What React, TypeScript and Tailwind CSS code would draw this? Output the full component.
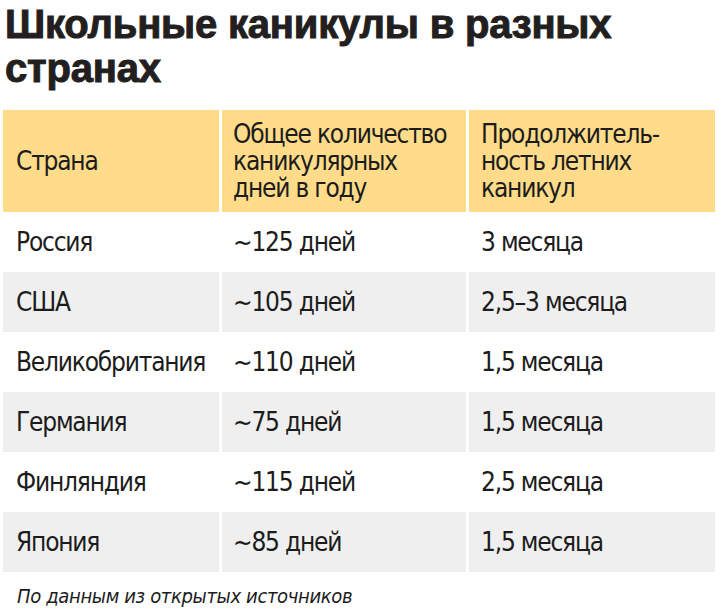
const rows = [
  { country: "Россия", days: "~125 дней", summer: "3 месяца" },
  { country: "США", days: "~105 дней", summer: "2,5–3 месяца" },
  { country: "Великобритания", days: "~110 дней", summer: "1,5 месяца" },
  { country: "Германия", days: "~75 дней", summer: "1,5 месяца" },
  { country: "Финляндия", days: "~115 дней", summer: "2,5 месяца" },
  { country: "Япония", days: "~85 дней", summer: "1,5 месяца" },
];

export default function App() {
  return (
    <div className="w-[720px] h-[615px] bg-white overflow-hidden">
      {/* title */}
      <h1 className="px-[5px] pt-[2px] text-[40px] leading-[44px] font-extrabold tracking-[-0.2px] text-[#231f20] [-webkit-text-stroke:1px_#231f20] font-['Liberation_Sans',Arial,sans-serif]">
        Школьные каникулы в разных странах
      </h1>

      <table className="mt-[20px] border-separate border-spacing-x-[3px] border-spacing-y-0 text-[26px] leading-[27px] tracking-[-1.2px] text-[#1c1c1c] font-['DejaVu_Sans_Condensed','DejaVu_Sans',sans-serif]">
        <thead>
          <tr className="bg-[#ffdb8a] h-[102px]">
            <th className="w-[216px] px-[13px] text-left font-normal align-middle">Страна</th>
            <th className="w-[244px] px-[11px] text-left font-normal align-middle">
              Общее количество каникулярных дней в году
            </th>
            <th className="w-[246px] px-[12px] text-left font-normal align-middle">
              Продолжитель-
              <br />
              ность летних каникул
            </th>
          </tr>
        </thead>
        <tbody>
          {rows.map((r, i) => (
            <tr key={r.country} className={i % 2 === 1 ? "bg-[#efefef] h-[60px]" : "bg-white h-[60px]"}>
              <td className="px-[13px]">{r.country}</td>
              <td className="px-[11px]">{r.days}</td>
              <td className="px-[12px]">{r.summer}</td>
            </tr>
          ))}
        </tbody>
      </table>

      <p className="mt-[13px] px-[17px] text-[20px] leading-[22px] italic tracking-[-0.35px] text-[#1c1c1c] font-['DejaVu_Sans_Condensed','DejaVu_Sans',sans-serif]">
        По данным из открытых источников
      </p>
    </div>
  );
}
